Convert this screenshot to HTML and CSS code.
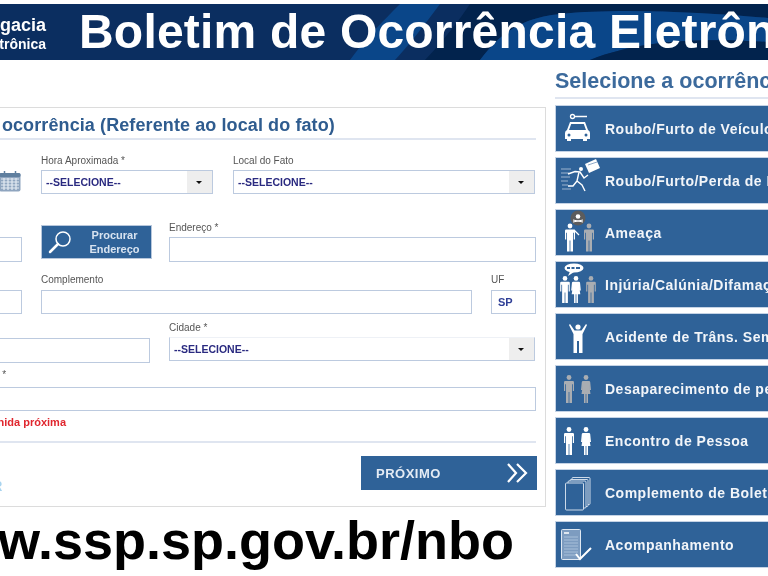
FILE: index.html
```html
<!DOCTYPE html>
<html lang="pt-BR">
<head>
  <meta charset="UTF-8" />
  <title>Boletim de Ocorrência Eletrônico</title>
  <link rel="stylesheet" href="styles.css">
</head>
<body>

  <svg class="defs" width="0" height="0">
    <symbol id="man" viewBox="0 0 10 28">
      <circle cx="5" cy="2.5" r="2.4"/>
      <path d="M1.2 6h7.6q1.2 0 1.2 1.2V16H8.8V9.2H8V28H5.4V17H4.6V28H2V9.2H1.2V16H0V7.2Q0 6 1.2 6z"/>
    </symbol>
    <symbol id="woman" viewBox="0 0 10 28">
      <circle cx="5" cy="2.5" r="2.4"/>
      <path d="M2 6h6q1 0 1.2 1l.8 8H8.9L8 9.5 9.5 19H7V28H5.4V19H4.6V28H3V19H.5L2 9.500 1.100 15H0l.8-8Q1 6 2 6z"/>
    </symbol>
  </svg>

  <!-- Banner -->
  <header class="banner">
    <svg class="swoosh" viewBox="0 0 768 56" preserveAspectRatio="none">
      <path fill="#0a4689" d="M350 56 C365 35 385 15 400 0 H440 C425 20 410 40 395 56z"/>
      <path fill="#02234d" d="M425 56 C445 35 460 15 470 0 H768 V14 C700 8 620 4 560 10 C520 14 500 30 480 56z"/>
      <path fill="#0a4689" d="M480 56 C500 30 520 14 560 10 C620 4 700 8 768 14 V38 C700 34 640 36 590 56z"/>
      <path fill="#02234d" d="M590 56 C640 36 700 34 768 38 V56z"/>
    </svg>
    <div class="brand">
      <span class="brand-top">Delegacia</span>
      <span class="brand-bottom">Eletrônica</span>
    </div>
    <h1>Boletim de Ocorrência Eletrônico</h1>
  </header>

  <div class="content">

    <!-- Formulario -->
    <main class="main">
      <section class="panel">
        <h2>Dados da ocorrência (Referente ao local do fato)</h2>

        <div class="row row-1">
          <div class="cell w-date">
            <svg class="calendar" viewBox="0 0 22 21" width="22" height="21">
              <rect x="0.5" y="2" width="21" height="18.500" rx="2" fill="#8fa5bf"/>
              <rect x="0.5" y="2" width="21" height="4" rx="1.500" fill="#5f7f9f"/>
              <path d="M2 8h18M2 11h18M2 14h18M2 17h18M5 7v12M9 7v12M13 7v12M17 7v12" stroke="#e4ebf3" stroke-width="1.200"/>
              <path d="M5.500 0v4M16.500 0v4" stroke="#5f7f9f" stroke-width="1.500"/>
            </svg>
          </div>
          <div class="field w-hora">
            <label>Hora Aproximada *</label>
            <div class="select"><span>--SELECIONE--</span><i class="arrow"></i></div>
          </div>
          <div class="field w-local">
            <label>Local do Fato</label>
            <div class="select"><span>--SELECIONE--</span><i class="arrow"></i></div>
          </div>
        </div>

        <div class="row row-2">
          <div class="field w-short">
            <label>CEP *</label>
            <div class="input"></div>
          </div>
          <a class="search-btn">
            <svg viewBox="0 0 24 24" width="24" height="24">
              <circle cx="15" cy="9" r="7" fill="none" stroke="#fff" stroke-width="1.500"/>
              <path d="M10 14 2 22" stroke="#fff" stroke-width="2.500" stroke-linecap="round"/>
            </svg>
            <span>Procurar<br>Endereço</span>
          </a>
          <div class="field w-endereco">
            <label>Endereço *</label>
            <div class="input"></div>
          </div>
        </div>

        <div class="row row-3">
          <div class="field w-short">
            <label>Número *</label>
            <div class="input"></div>
          </div>
          <div class="field w-compl">
            <label>Complemento</label>
            <div class="input"></div>
          </div>
          <div class="field w-uf">
            <label>UF</label>
            <div class="input input-value">SP</div>
          </div>
        </div>

        <div class="row row-4">
          <div class="field w-bairro">
            <label>Bairro *</label>
            <div class="input input-bairro"></div>
          </div>
          <div class="field w-endereco">
            <label>Cidade *</label>
            <div class="select select-open"><span>--SELECIONE--</span><i class="arrow"></i></div>
          </div>
        </div>

        <div class="row-5">
          <label class="label-ref">Referência *</label>
          <div class="input input-ref"></div>
          <p class="hint">Ex: Avenida próxima</p>
        </div>

        <div class="nav">
          <a class="back">VOLTAR</a>
          <a class="next">
            <span>PRÓXIMO</span>
            <svg viewBox="0 0 22 20" width="22" height="20">
              <path d="M2 1 10 10 2 19M11 1 20 10 11 19" fill="none" stroke="#fff" stroke-width="2.200"/>
            </svg>
          </a>
        </div>
      </section>

      <p class="url">www.ssp.sp.gov.br/nbo</p>
    </main>

    <!-- Menu de ocorrencias -->
    <aside class="side">
      <h2>Selecione a ocorrência</h2>

      <a class="item">
        <svg viewBox="0 0 50 47" width="50" height="47">
          <circle cx="17.500" cy="11.500" r="2" fill="none" stroke="#fff" stroke-width="1.300"/>
          <path d="M20 11.500h12" stroke="#fff" stroke-width="1.500"/>
          <path fill="#fff" d="M15 17h15l3 8q2 1 2 3v6h-3v2h-4v-2H16v2h-4v-2H10v-6q0-2 2-3zM16.200 19l-2.200 6h17l-2.200-6z"/>
          <circle cx="14" cy="30" r="1.500" fill="#2f6298"/>
          <circle cx="31" cy="30" r="1.500" fill="#2f6298"/>
        </svg>
        <span>Roubo/Furto de Veículo</span>
      </a>

      <a class="item">
        <svg viewBox="0 0 50 47" width="50" height="47">
          <path d="M6 12h10M6 16h8M6 20h9M6 24h7M7 28h6M7 32h9" stroke="#b9c9dc" stroke-width="0.800"/>
          <circle cx="26" cy="12" r="2" fill="#fff"/>
          <path d="M13 17 20 14.500 25 15 29 21 33 18M24 15 22 24 27 28 30 34M22 24 18 29 13 29" fill="none" stroke="#fff" stroke-width="1.400"/>
          <path fill="#fff" d="M30 7 41 2 45 11 34 16z"/>
          <path d="M33 8 42 5" stroke="#8fa9c8" stroke-width="1"/>
        </svg>
        <span>Roubo/Furto/Perda de Documentos</span>
      </a>

      <a class="item">
        <svg viewBox="0 0 50 47" width="50" height="47">
          <circle cx="23" cy="9" r="7.500" fill="#5c5c5c"/>
          <circle cx="23" cy="7.500" r="2.300" fill="#fff"/>
          <path d="M18 11 28 13M28 11 18 13" stroke="#fff" stroke-width="1"/>
          <use href="#man" x="10" y="14" width="10" height="29" class="fig-white"/>
          <path d="M19 21 24 26" stroke="#fff" stroke-width="1.300"/>
          <use href="#man" x="29" y="14" width="10" height="29" class="fig-grey"/>
        </svg>
        <span>Ameaça</span>
      </a>

      <a class="item">
        <svg viewBox="0 0 50 47" width="50" height="47">
          <ellipse cx="19" cy="7" rx="9.500" ry="4.500" fill="#fff"/>
          <path d="M15 10.500 13 15 19 11z" fill="#fff"/>
          <path d="M12 7h3M16.500 7h3M21 7h4" stroke="#2f6298" stroke-width="1.800"/>
          <use href="#man" x="5" y="15" width="10" height="27" class="fig-white"/>
          <use href="#woman" x="16" y="15" width="10" height="27" class="fig-white"/>
          <use href="#man" x="31" y="15" width="10" height="27" class="fig-grey"/>
        </svg>
        <span>Injúria/Calúnia/Difamação</span>
      </a>

      <a class="item">
        <svg viewBox="0 0 50 47" width="50" height="47">
          <circle cx="23" cy="14" r="2.600" fill="#fff"/>
          <path fill="#fff" d="M15 11 19.500 17.500H26.500L31 11 32 12 27.500 21V40H24V28H22V40H18.500V21L14 12z"/>
        </svg>
        <span>Acidente de Trâns. Sem Vítima</span>
      </a>

      <a class="item">
        <svg viewBox="0 0 50 47" width="50" height="47">
          <use href="#man" x="9" y="10" width="10" height="28" class="fig-grey"/>
          <use href="#woman" x="26" y="10" width="10" height="28" class="fig-grey"/>
        </svg>
        <span>Desaparecimento de pessoa</span>
      </a>

      <a class="item">
        <svg viewBox="0 0 50 47" width="50" height="47">
          <use href="#man" x="9" y="10" width="10" height="28" class="fig-white"/>
          <use href="#woman" x="26" y="10" width="10" height="28" class="fig-white"/>
        </svg>
        <span>Encontro de Pessoa</span>
      </a>

      <a class="item">
        <svg viewBox="0 0 50 47" width="50" height="47">
          <g fill="#2f6298" stroke="#dfe8f2" stroke-width="0.900">
            <rect x="17" y="8.500" width="18" height="27" rx="1"/>
            <rect x="15" y="10.500" width="18" height="27" rx="1"/>
            <rect x="13" y="12" width="18" height="27" rx="1"/>
            <rect x="10.500" y="14" width="18" height="27" rx="1"/>
          </g>
        </svg>
        <span>Complemento de Boletim</span>
      </a>

      <a class="item">
        <svg viewBox="0 0 50 47" width="50" height="47">
          <rect x="6.500" y="8.500" width="19" height="30" rx="1" fill="#7d9cc0" stroke="#dfe8f2"/>
          <path d="M9 12h5" stroke="#fff" stroke-width="1.500"/>
          <path d="M9 16h14M9 19h14M9 22h14M9 25h14M9 28h14M9 31h14M9 34h14" stroke="#a9c0da" stroke-width="1"/>
          <path d="M21 33 25 38 36 27" fill="none" stroke="#fff" stroke-width="2"/>
        </svg>
        <span>Acompanhamento</span>
      </a>
    </aside>
  </div>

</body>
</html>
```

FILE: styles.css
```css
body {
  margin: 0;
  width: 768px;
  height: 576px;
  overflow: hidden;
  background: #fff;
  font-family: "Liberation Sans", Arial, sans-serif;
  filter: blur(0.5px);
}

.defs {
  display: block;
}

.fig-white {
  fill: #fff;
}

.fig-grey {
  fill: #a9adb2;
}

/* Banner */
.banner {
  position: relative;
  display: flex;
  align-items: center;
  margin-top: 4px;
  height: 56px;
  background: #0b2e60;
  color: #fff;
  white-space: nowrap;
  overflow: hidden;
}

.swoosh {
  position: absolute;
  top: 0;
  left: 0;
  width: 100%;
  height: 100%;
}

.brand {
  position: relative;
  flex: none;
  display: flex;
  flex-direction: column;
  align-items: flex-end;
  width: 100px;
  margin: 3px 0 0 -54px;
  font-weight: bold;
}

.brand-top {
  font-size: 18px;
  line-height: 20px;
}

.brand-bottom {
  font-size: 14px;
  line-height: 18px;
}

.banner h1 {
  position: relative;
  margin: 0 0 0 33px;
  font-size: 48px;
  letter-spacing: 0.2px;
  line-height: 56px;
}

/* Layout */
.content {
  display: flex;
  align-items: flex-start;
}

.main {
  flex: none;
  width: 646px;
  margin-left: -100px;
  padding-top: 47px;
}

.panel {
  box-sizing: border-box;
  height: 400px;
  padding: 6px 9px 0 22px;
  border: 1px solid #dcdcdc;
}

.panel h2 {
  margin: 0;
  padding-bottom: 2px;
  border-bottom: 2px solid #dfe5f0;
  font-size: 18px;
  letter-spacing: 0.1px;
  line-height: 22px;
  text-indent: -8px;
  color: #2f5c8f;
  white-space: nowrap;
}

/* Linhas do formulario */
.row {
  display: flex;
  gap: 19px;
}

.row-1 {
  margin-top: 15px;
  gap: 20px;
}

.row-2 {
  gap: 17px;
  margin-top: 28px;
}

.row-3 {
  margin-top: 12px;
}

.row-4 {
  margin-top: 8px;
}

.row-5 {
  margin-top: 6px;
}

.cell {
  display: flex;
  align-items: flex-end;
  justify-content: flex-end;
  padding-bottom: 2px;
}

.field {
  display: flex;
  flex-direction: column;
  gap: 3px;
}

.row-3 .field {
  gap: 4px;
}

.w-date { width: 98px; }
.w-hora { width: 172px; }
.w-local { width: 302px; }
.w-short { width: 99px; }
.w-endereco { width: 367px; }
.w-compl { width: 431px; }
.w-uf { width: 45px; }
.w-bairro { width: 227px; }

label {
  display: block;
  font-size: 10px;
  line-height: 12px;
  color: #555;
}

.label-ref {
  margin: 0 0 6px 28px;
}

.input {
  box-sizing: border-box;
  height: 25px;
  border: 1px solid #bccadf;
  font-size: 11px;
  line-height: 23px;
}

.row-3 .input,
.input-ref {
  height: 24px;
}

.input-bairro {
  margin-top: 1px;
}

.input-value {
  padding-left: 6px;
  font-weight: bold;
  color: #2f3f96;
}

.select {
  box-sizing: border-box;
  display: flex;
  align-items: center;
  justify-content: space-between;
  height: 24px;
  padding-left: 4px;
  border: 1px solid #bccadf;
  font-size: 10.500px;
  font-weight: bold;
  color: #2a2a80;
}

.select-open {
  margin-right: 1px;
  border-top-color: #eef1f6;
}

.arrow {
  position: relative;
  flex: none;
  align-self: stretch;
  width: 25px;
  background: #eeeeee;
}

.arrow::after {
  content: "";
  position: absolute;
  left: 9px;
  top: 10px;
  border: 3.500px solid transparent;
  border-top: 3.500px solid #111;
  border-bottom: 0;
}

.search-btn {
  box-sizing: border-box;
  flex: none;
  display: flex;
  align-items: center;
  width: 111px;
  height: 34px;
  margin: 3px 0 0 2px;
  padding-left: 6px;
  border: 1px solid #b7c7dc;
  background: #2f6298;
  color: #d8e3f0;
  font-size: 11px;
  font-weight: bold;
  line-height: 14px;
  text-align: center;
}

.search-btn span {
  flex: 1;
  padding-left: 6px;
}

.hint {
  margin: 5px 0 0 35px;
  font-size: 11px;
  font-weight: bold;
  line-height: 13px;
  color: #e0262e;
}

.nav {
  display: flex;
  align-items: center;
  justify-content: space-between;
  margin-top: 12px;
  padding-top: 13px;
  border-top: 2px solid #dfe5f0;
}

.back {
  align-self: flex-end;
  margin: 0 0 -4px 24px;
  font-size: 14px;
  font-weight: bold;
  color: #a9d4ef;
}

.next {
  box-sizing: border-box;
  display: flex;
  align-items: center;
  justify-content: space-between;
  width: 176px;
  height: 34px;
  margin-right: -1px;
  padding: 0 9px 0 15px;
  background: #2f6298;
  color: #e4ebf4;
  font-size: 13px;
  font-weight: bold;
  letter-spacing: 0.5px;
}

.url {
  margin: 2px 0 0;
  padding-right: 32px;
  text-align: right;
  font-size: 54px;
  font-weight: bold;
  line-height: 62px;
  color: #000;
  white-space: nowrap;
}

/* Menu lateral */
.side {
  flex: none;
  width: 300px;
  margin-left: 9px;
  padding-top: 9px;
}

.side h2 {
  margin: 0 0 6px;
  padding-bottom: 4px;
  border-bottom: 2px solid #dfe5f0;
  font-size: 21.500px;
  line-height: 24px;
  color: #3c6a9c;
  white-space: nowrap;
}

.item {
  box-sizing: border-box;
  display: flex;
  align-items: center;
  height: 47px;
  margin-bottom: 5px;
  border: 1px solid #c5d3e5;
  background: #2f6298;
  color: #f2f5f9;
  font-size: 14px;
  font-weight: bold;
  letter-spacing: 0.5px;
  white-space: nowrap;
}

.item svg {
  flex: none;
  margin: -1px 0 -1px -1px;
  fill: #fff;
}
```
